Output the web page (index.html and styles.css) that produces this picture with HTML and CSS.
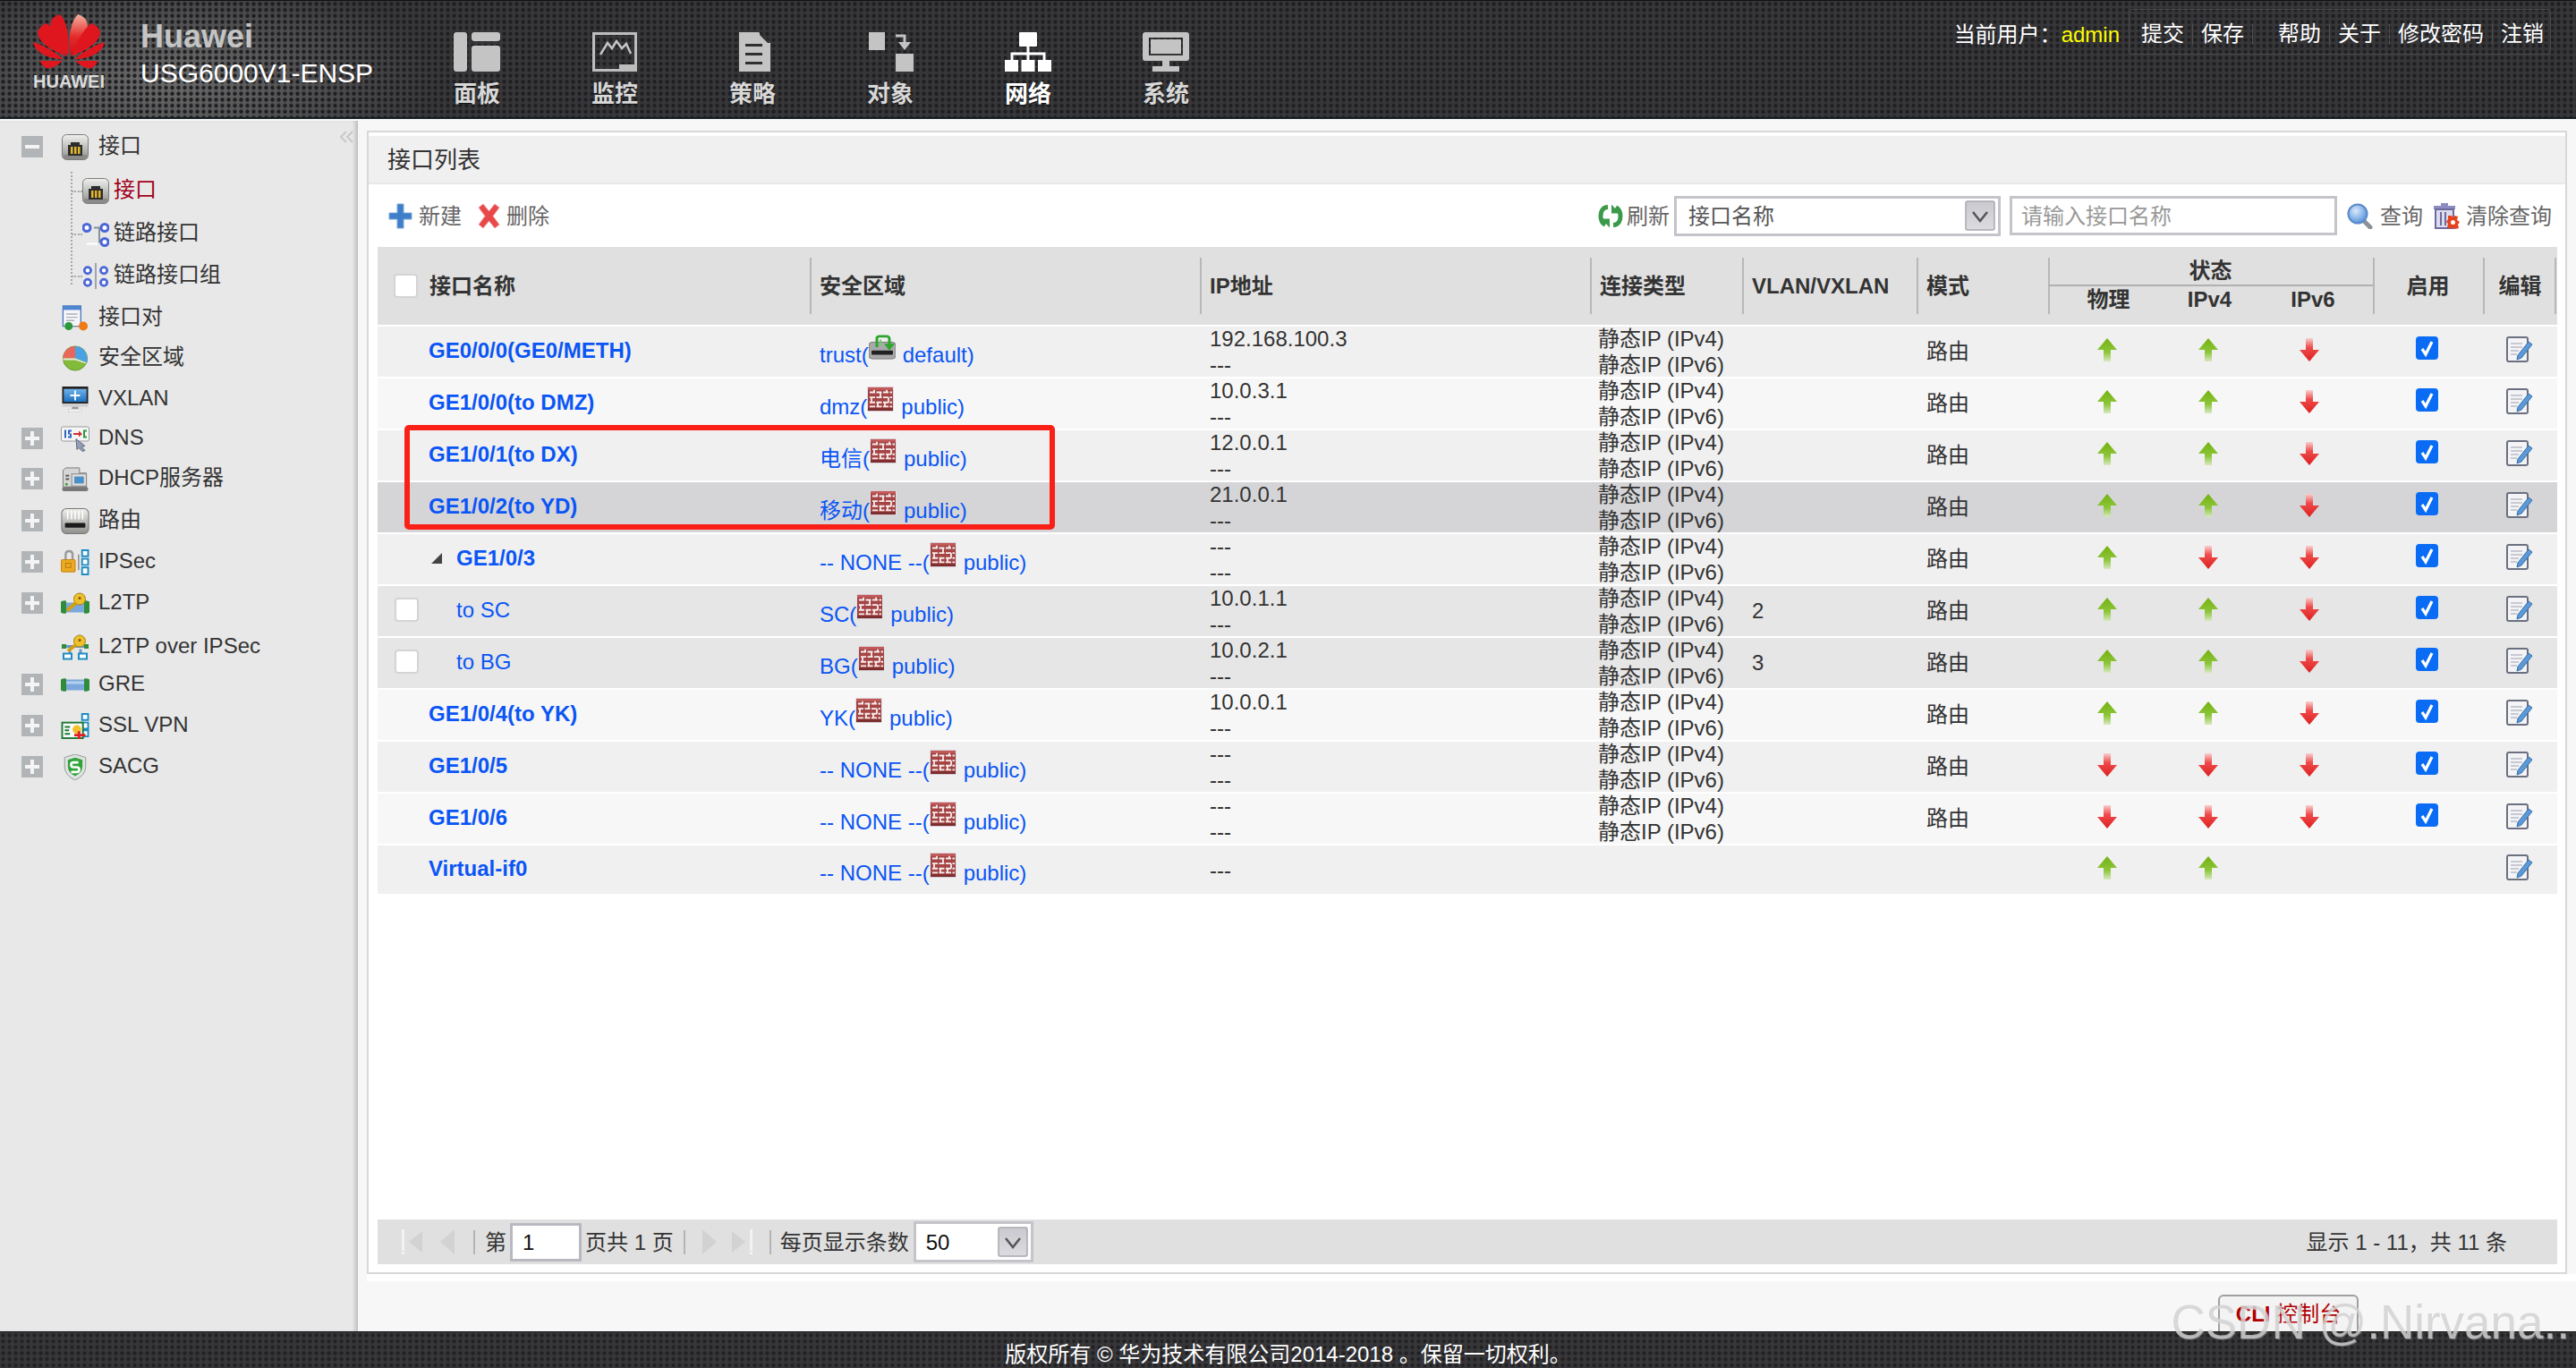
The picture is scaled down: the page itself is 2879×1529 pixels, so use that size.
FILE: index.html
```html
<!DOCTYPE html>
<html lang="zh-CN">
<head>
<meta charset="utf-8">
<title>USG6000V1-ENSP</title>
<link rel="stylesheet" href="styles.css">
</head>
<body>
<svg class="defs" aria-hidden="true">
  <defs>
    <linearGradient id="g-up" x1="0" y1="0" x2="0" y2="1"><stop offset="0" stop-color="#74b10f"/><stop offset=".6" stop-color="#8cc63a"/><stop offset="1" stop-color="#d8e8c0"/></linearGradient>
    <linearGradient id="g-down" x1="0" y1="1" x2="0" y2="0"><stop offset="0" stop-color="#dd2020"/><stop offset=".6" stop-color="#ef4a4a"/><stop offset="1" stop-color="#f8d0d0"/></linearGradient>
    <linearGradient id="g-btn" x1="0" y1="0" x2="0" y2="1"><stop offset="0" stop-color="#c9c9cf"/><stop offset="1" stop-color="#dcdce0"/></linearGradient>
    <linearGradient id="g-petal" x1="0" y1="0" x2="0" y2="1"><stop offset="0" stop-color="#f6b0a0"/><stop offset=".55" stop-color="#e32a2a"/><stop offset="1" stop-color="#d0101a"/></linearGradient>
    <linearGradient id="g-blue" x1="0" y1="0" x2="0" y2="1"><stop offset="0" stop-color="#6fb4ec"/><stop offset="1" stop-color="#1d6fc0"/></linearGradient>
    <linearGradient id="g-port" x1="0" y1="0" x2="0" y2="1"><stop offset="0" stop-color="#f0f0ee"/><stop offset="1" stop-color="#8f8f8c"/></linearGradient>
    <radialGradient id="g-lens" cx=".4" cy=".35" r=".7"><stop offset="0" stop-color="#dbe9fb"/><stop offset="1" stop-color="#4f8fdc"/></radialGradient>

    <symbol id="s-logo" viewBox="0 0 78 62" preserveAspectRatio="none">
      <g fill="#e0161e">
        <path d="M38 47C24 34 15 20 20 8 22 4 26 2 29 1 37 8 40 26 38 47Z"/>
        <path d="M36 48C20 41 4 32 5 20 7 15 11 12 15 11 24 20 33 34 36 48Z"/>
        <path d="M33 51C20 51 3 46 0 32 10 35 24 43 33 51Z"/>
        <path d="M32 53C25 60 18 62 14 61 11 59 9 56 7 53Z"/>
      </g>
      <g fill="#e0161e" transform="matrix(-1 0 0 1 78 0)">
        <path fill="url(#g-petal)" d="M38 47C24 34 15 20 20 8 22 4 26 2 29 1 37 8 40 26 38 47Z"/>
        <path d="M36 48C20 41 4 32 5 20 7 15 11 12 15 11 24 20 33 34 36 48Z"/>
        <path d="M33 51C20 51 3 46 0 32 10 35 24 43 33 51Z"/>
        <path d="M32 53C25 60 18 62 14 61 11 59 9 56 7 53Z"/>
      </g>
    </symbol>

    <symbol id="n-panel" viewBox="0 0 52 44"><rect x="0" y="0" width="15" height="44" rx="3" fill="#c4c4c4"/><rect x="20" y="0" width="32" height="10" rx="3" fill="#c4c4c4"/><rect x="20" y="15" width="32" height="29" rx="3" fill="#c4c4c4"/></symbol>
    <symbol id="n-monitor" viewBox="0 0 50 44"><path fill="#bdbdbd" d="M0 0H50V44H0ZM3 3V41H30V36H47V3Z"/><path fill="none" stroke="#c4c4c4" stroke-width="2.5" d="M9 25L17 12 22 18 27 10 33 18 38 13 43 24"/><rect x="33" y="37" width="14" height="4" fill="#bdbdbd"/></symbol>
    <symbol id="n-policy" viewBox="0 0 40 44"><path fill="#c4c4c4" d="M5 0H27L40 12V44H5Z"/><path fill="#2f2f32" d="M12 13H31V16H12ZM12 23H31V26H12ZM12 33H31V36H12Z"/><path fill="#2f2f32" d="M28 0L40 12H37L28 3Z"/></symbol>
    <symbol id="n-object" viewBox="0 0 52 44"><rect x="2" y="0" width="18" height="20" fill="#c4c4c4"/><rect x="32" y="24" width="20" height="20" fill="#c4c4c4"/><path fill="none" stroke="#c4c4c4" stroke-width="3" d="M32 4H42V12"/><path fill="#c4c4c4" d="M35 11H49L42 20Z"/></symbol>
    <symbol id="n-network" viewBox="0 0 52 44"><rect x="16" y="0" width="20" height="16" rx="1" fill="#fff"/><path fill="none" stroke="#fff" stroke-width="3" d="M26 16V24M8 32V24H44V32M26 24V32"/><rect x="0" y="31" width="15" height="13" fill="#fff"/><rect x="18.500" y="31" width="15" height="13" fill="#fff"/><rect x="37" y="31" width="15" height="13" fill="#fff"/></symbol>
    <symbol id="n-system" viewBox="0 0 52 44"><path fill="#c4c4c4" d="M3 0H49Q52 0 52 3V29Q52 32 49 32H3Q0 32 0 29V3Q0 0 3 0ZM7 6V26H45V6Z"/><rect x="9" y="8" width="34" height="16" fill="#c4c4c4"/><rect x="22" y="32" width="8" height="6" fill="#c4c4c4"/><rect x="11" y="38" width="30" height="6" fill="#c4c4c4"/></symbol>

    <symbol id="i-port" viewBox="0 0 30 29"><rect x=".5" y=".5" width="29" height="28" rx="5" fill="url(#g-port)" stroke="#7c7c7a"/><rect x="2" y="23" width="26" height="5" fill="#8a8a88"/><path fill="#2d2d2d" d="M7 12H10V9H20V12H23V24H7Z"/><path fill="#e2b52c" d="M10 14H12.500V22H10ZM14 14H16.500V22H14ZM18 14H20.500V22H18Z"/></symbol>
    <symbol id="i-link" viewBox="0 0 30 28"><path fill="none" stroke="#8a8f99" stroke-width="2" d="M13 7H19V23H25"/><circle cx="5" cy="7" r="4" fill="#fff" stroke="#4a66d8" stroke-width="3"/><circle cx="25" cy="7" r="4" fill="#fff" stroke="#4a66d8" stroke-width="3"/><circle cx="25" cy="23" r="4" fill="#fff" stroke="#4a66d8" stroke-width="3"/><rect x="5" y="24" width="12" height="2" fill="#fff"/></symbol>
    <symbol id="i-linkgroup" viewBox="0 0 30 32"><rect x="14" y="0" width="2" height="32" fill="#9a9ea6"/><circle cx="5" cy="9" r="4" fill="#fff" stroke="#4a66d8" stroke-width="3"/><circle cx="25" cy="9" r="4" fill="#fff" stroke="#4a66d8" stroke-width="3"/><circle cx="5" cy="24" r="4" fill="#fff" stroke="#4a66d8" stroke-width="3"/><circle cx="25" cy="24" r="4" fill="#fff" stroke="#4a66d8" stroke-width="3"/></symbol>
    <symbol id="i-pair" viewBox="0 0 32 32"><path fill="#f6f6fa" stroke="#4e78c0" stroke-width="1.500" d="M1 1H23V26H1Z"/><rect x="1" y="1" width="22" height="5" fill="#4e86d0"/><path stroke="#b0b0b8" stroke-width="1.500" d="M5 11H19M5 15H19M5 19H15"/><circle cx="8" cy="26" r="5" fill="#2c9a3c"/><circle cx="26" cy="26" r="5.500" fill="#f07a14"/><path stroke="#888" d="M13 26H20"/></symbol>
    <symbol id="i-zone" viewBox="0 0 30 30"><circle cx="15" cy="15" r="14" fill="#82bb3a" stroke="#5f9a22"/><path fill="#e8675a" d="M15 15V1A14 14 0 0 0 1 15Z"/><path fill="#4aa2e4" d="M15 15V1A14 14 0 0 1 29 15L29 20Z"/><path fill="#e8e8d8" d="M1 15H15L28 20 27 21 15 17H1Z"/></symbol>
    <symbol id="i-vxlan" viewBox="0 0 32 32"><rect x="0" y="0" width="32" height="21" fill="#222"/><rect x="2" y="3" width="28" height="16" fill="url(#g-blue)"/><path fill="#fff" d="M15 5H17V10H22V12H17V17H15V12H10V10H15Z"/><rect x="0" y="21" width="32" height="4" fill="#d0d0d0"/><rect x="12" y="25" width="8" height="3" fill="#999"/><rect x="8" y="28" width="16" height="3" fill="#f4f4f4" stroke="#bbb" stroke-width=".5"/></symbol>
    <symbol id="i-dns" viewBox="0 0 32 28"><rect x=".5" y=".5" width="31" height="16" rx="2" fill="#f6f6f6" stroke="#9a9a9a"/><path fill="#2a66c4" d="M4 4H6V13H4ZM8 4H12V6H10V8H12V13H8V11H10V9H8Z"/><path fill="#d03030" d="M14 7.500H20V5L24 8.500 20 12V9.500H14Z"/><path fill="#2a9a40" d="M25 4H29V6H27V11H29V13H25Z"/><path fill="#8ea0bc" stroke="#667" d="M17 14L27 22 23 23 27 27 24 28 20 24 18 26Z"/></symbol>
    <symbol id="i-dhcp" viewBox="0 0 30 30"><path fill="#d6d6d6" stroke="#777" d="M4 2H20V8H28V24H1V5Z"/><rect x="11" y="9" width="17" height="14" fill="#dcdcdc" stroke="#888"/><rect x="14" y="12" width="11" height="8" fill="#4a90c8"/><rect x="4" y="10" width="4" height="2" fill="#555"/><rect x="4" y="14" width="4" height="2" fill="#555"/><rect x="0" y="24" width="30" height="5" rx="2" fill="#777"/><circle cx="5" cy="21" r="1.500" fill="#3aa03a"/></symbol>
    <symbol id="i-route" viewBox="0 0 30 28"><rect x=".5" y=".5" width="29" height="27" rx="5" fill="url(#g-port)" stroke="#777"/><path stroke="#fff" stroke-width="1.500" d="M7 3V12M11 3V12M15 3V12M19 3V12M23 3V12"/><rect x="4" y="16" width="22" height="5" rx="1" fill="#1c1c1c"/></symbol>
    <symbol id="i-ipsec" viewBox="0 0 32 30"><path fill="none" stroke="#9a9a9a" stroke-width="2.500" d="M5 12V6Q5 2 9 2 13 2 13 6V12"/><rect x="0" y="12" width="16" height="14" rx="1" fill="#ecaa22" stroke="#c07f10"/><rect x="5" y="16" width="6" height="5" fill="none" stroke="#b67810"/><path stroke="#888" stroke-width="1.500" d="M20 6V24"/><path fill="#fff" stroke="#1d8cc4" stroke-width="2" d="M24 1H31V8H24ZM24 11H31V18H24ZM24 21H31V29H24Z"/></symbol>
    <symbol id="i-l2tp" viewBox="0 0 32 24"><rect x="3" y="11" width="26" height="11" fill="#7aa8dc"/><path fill="#2e8c3a" d="M0 10Q4 8 6 9V23Q3 24 0 22ZM32 10Q28 8 26 9V23Q29 24 32 22Z"/><circle cx="21" cy="7" r="6.500" fill="#eec02c" stroke="#a57f10"/><path stroke="#d0a010" stroke-width="4" d="M17 11L7 20"/><circle cx="21" cy="6" r="1.500" fill="#7a5a08"/></symbol>
    <symbol id="i-l2tpi" viewBox="0 0 32 28"><path stroke="#2e8c3a" stroke-width="5" d="M1 13H6M26 13H31"/><path stroke="#6a96d0" stroke-width="3" d="M6 13H26M10 16V21M22 16V21"/><path fill="#fff" stroke="#1d8cc4" stroke-width="2" d="M3 21H12V27H3ZM20 21H29V27H20Z"/><circle cx="21" cy="7" r="6.500" fill="#eec02c" stroke="#a57f10"/><path stroke="#d0a010" stroke-width="4" d="M17 11L8 18"/><circle cx="21" cy="6" r="1.500" fill="#7a5a08"/></symbol>
    <symbol id="i-gre" viewBox="0 0 32 16"><rect x="4" y="2" width="24" height="12" fill="#7aa8dc"/><rect x="4" y="4" width="24" height="3" fill="#b4d0ee"/><path fill="#2e8c3a" d="M0 2Q3 0 6 1V15Q3 16 0 14ZM32 2Q29 0 26 1V15Q29 16 32 14Z"/></symbol>
    <symbol id="i-ssl" viewBox="0 0 32 30"><path fill="#fff" stroke="#1d8cc4" stroke-width="2" d="M24 1H31V8H24ZM24 11H31V18H24ZM24 20H31V27H24Z"/><rect x="1" y="11" width="24" height="18" fill="#fafafa" stroke="#1a7a34" stroke-width="2"/><path stroke="#1a7a34" stroke-width="2" d="M4 16H10M4 20H9M4 24H10"/><circle cx="18" cy="19" r="5" fill="#f2c02c"/><path fill="#e02020" d="M19 21H22V24H28V27H22V30H19V27H15V24H19Z"/></symbol>
    <symbol id="i-sacg" viewBox="0 0 28 32"><path fill="#dfe3e2" stroke="#8c9490" d="M14 0L27 4V15Q27 26 14 32 1 26 1 15V4Z"/><path fill="#2fa43a" d="M14 4L23 7V15Q23 23 14 27 5 23 5 15V7Z"/><path fill="none" stroke="#fff" stroke-width="3" d="M18 10H12Q9 10 9 13T12 16H16Q19 16 19 19T16 22H9"/></symbol>

    <symbol id="i-wall" viewBox="0 0 30 30" preserveAspectRatio="none"><rect x="0" y="0" width="30" height="30" fill="#dfe3ec"/><rect x="1" y="1" width="28" height="28" fill="#a44444"/><rect x="1" y="1" width="28" height="3" fill="#c25a5a"/><path stroke="#f8eeee" stroke-width="2" fill="none" stroke-dasharray="6 1.500" d="M3 7H28M3 13H28M3 19H28M3 24H28"/><path stroke="#f8eeee" stroke-width="1.800" d="M8 4V7M22 4V7M15 7V13M5 13V19M24 13V19M12 19V24M20 19V24"/><rect x="1" y="26" width="28" height="3" fill="#7c2c2c"/></symbol>
    <symbol id="i-trust" viewBox="0 0 30 30" preserveAspectRatio="none"><rect x="0" y="9" width="30" height="20" rx="4" fill="#a9a9a9" stroke="#777"/><rect x="3" y="19" width="24" height="5" rx="1" fill="#222"/><path fill="none" stroke="#2ea52e" stroke-width="3" d="M9 15V4A3 3 0 0 1 12 2H20A3 3 0 0 1 23 5V12"/><path fill="#2ea52e" d="M17 11H29L23 19Z"/><path fill="none" stroke="#78c878" stroke-width="2" d="M13 6V14"/></symbol>

    <symbol id="i-up" viewBox="0 0 22 26"><path fill="url(#g-up)" d="M11 0L22 13H15V26H7V13H0Z"/></symbol>
    <symbol id="i-down" viewBox="0 0 22 26"><path fill="url(#g-down)" d="M7 0H15V13H22L11 26 0 13H7Z"/></symbol>
    <symbol id="i-check" viewBox="0 0 25 26"><path fill="none" stroke="#fff" stroke-width="3.200" d="M7 14L11 20 18 6"/></symbol>
    <symbol id="i-edit" viewBox="0 0 30 29"><rect x="1" y="1" width="23" height="27" rx="2" fill="#f4f4f6" stroke="#6a7080" stroke-width="2"/><path stroke="#b8bcc6" stroke-width="1.500" d="M5 8H18M5 12H18M5 16H14M5 20H12"/><path fill="#5a9ad8" stroke="#3a6ea8" d="M25 6L29 9 17 24 12 26 13 21Z"/></symbol>

    <symbol id="t-add" viewBox="0 0 27 29"><path fill="#3f7fc8" stroke="#7aa8d8" d="M10 1H17V11H26V18H17V28H10V18H1V11H10Z"/></symbol>
    <symbol id="t-del" viewBox="0 0 25 29"><path fill="#e84848" stroke="#f0a0a0" d="M6 1L12.500 9 19 1 24 5 17 14.500 24 24 19 28 12.500 20 6 28 1 24 8 14.500 1 5Z"/></symbol>
    <symbol id="t-refresh" viewBox="0 0 30 28"><path fill="none" stroke="#3a9a4a" stroke-width="5" d="M12 4C6 4 4 9 4 14 4 19 6 22 9 24"/><path fill="#3a9a4a" d="M5 17H14V27Z"/><path fill="none" stroke="#3a9a4a" stroke-width="5" d="M18 24C24 24 26 19 26 14 26 9 24 6 21 4"/><path fill="#3a9a4a" d="M25 11H16V1Z"/></symbol>
    <symbol id="t-search" viewBox="0 0 29 29"><path stroke="#8c9098" stroke-width="5" stroke-linecap="round" d="M18 19L26 27"/><circle cx="12" cy="12" r="10.500" fill="url(#g-lens)" stroke="#5a8ac8" stroke-width="2"/></symbol>
    <symbol id="t-trash" viewBox="0 0 30 29"><path fill="#8d8cc0" d="M9 0H17V3H25V7H1V3H9Z"/><path fill="#dcdcec" stroke="#6c6ba0" stroke-width="2" d="M3 7H23V28H3Z"/><path stroke="#6c6ba0" stroke-width="2" d="M9 10V25M14 10V25"/><path fill="#e8421c" d="M17 14H21L22 16 25 14 28 15 27 19 30 21 28 24 29 28 25 29 22 27 19 29 16 27 17 23 15 21 17 18Z"/><circle cx="22.500" cy="21.500" r="2.500" fill="#fff"/></symbol>
    <symbol id="t-chev" viewBox="0 0 34 34"><rect x="1" y="1" width="32" height="32" rx="2" fill="url(#g-btn)" stroke="#a8a8ae" stroke-width="1.500"/><path fill="none" stroke="#555" stroke-width="2.500" d="M9 13L17 23 25 13"/></symbol>

    <symbol id="p-first" viewBox="0 0 23 28"><rect x="0" y="0" width="3" height="24" fill="#f2f2f2"/><rect x="0" y="25" width="3" height="3" fill="#f2f2f2"/><path fill="#d2d2d2" d="M23 2V26L8 14Z"/></symbol>
    <symbol id="p-prev" viewBox="0 0 16 28"><path fill="#d2d2d2" d="M16 0V28L0 14Z"/></symbol>
    <symbol id="p-next" viewBox="0 0 16 28"><path fill="#d2d2d2" d="M0 0V28L16 14Z"/></symbol>
    <symbol id="p-last" viewBox="0 0 24 28"><path fill="#d2d2d2" d="M0 2V26L15 14Z"/><rect x="20" y="0" width="3" height="24" fill="#f2f2f2"/><rect x="20" y="25" width="3" height="3" fill="#f2f2f2"/></symbol>
    <symbol id="i-collapse" viewBox="0 0 16 14"><path fill="none" stroke="#c8c8c8" stroke-width="2" d="M8 1L2 7 8 13M15 1L9 7 15 13"/></symbol>
  </defs>
</svg>

<header class="topbar">
  <div class="brand">
    <svg class="logo-mark"><use href="#s-logo"/></svg>
    <span class="logo-word">HUAWEI</span>
  </div>
  <div class="product">
    <div class="product-vendor">Huawei</div>
    <div class="product-name">USG6000V1-ENSP</div>
  </div>
  <nav class="mainnav">
    <a class="nav-item"><svg class="nav-icon"><use href="#n-panel"/></svg><span>面板</span></a>
    <a class="nav-item"><svg class="nav-icon"><use href="#n-monitor"/></svg><span>监控</span></a>
    <a class="nav-item"><svg class="nav-icon"><use href="#n-policy"/></svg><span>策略</span></a>
    <a class="nav-item"><svg class="nav-icon"><use href="#n-object"/></svg><span>对象</span></a>
    <a class="nav-item nav-active"><svg class="nav-icon"><use href="#n-network"/></svg><span>网络</span></a>
    <a class="nav-item"><svg class="nav-icon"><use href="#n-system"/></svg><span>系统</span></a>
  </nav>
  <div class="userbar">
    <span class="user-label">当前用户：</span><span class="user-name">admin</span>
    <div class="user-actions">
      <a class="ua">提交</a><a class="ua">保存</a><a class="ua ua-gap">帮助</a><a class="ua">关于</a><a class="ua">修改密码</a><a class="ua ua-last">注销</a>
    </div>
  </div>
</header>

<div class="main">
  <aside class="sidebar">
    <svg class="collapse"><use href="#i-collapse"/></svg>
    <div class="tree-row"><span class="exp exp-minus"></span><svg class="tree-icon"><use href="#i-port"/></svg><span class="tree-label">接口</span></div>
    <div class="subtree">
      <div class="tree-row sub t-p3"><svg class="sub-icon"><use href="#i-port"/></svg><span class="tree-label sel">接口</span></div>
      <div class="tree-row sub t-p2"><svg class="sub-icon"><use href="#i-link"/></svg><span class="tree-label">链路接口</span></div>
      <div class="tree-row sub t-p1"><svg class="sub-icon"><use href="#i-linkgroup"/></svg><span class="tree-label">链路接口组</span></div>
    </div>
    <div class="tree-row t-p1"><span class="exp exp-none"></span><svg class="tree-icon"><use href="#i-pair"/></svg><span class="tree-label">接口对</span></div>
    <div class="tree-row t-n1"><span class="exp exp-none"></span><svg class="tree-icon"><use href="#i-zone"/></svg><span class="tree-label">安全区域</span></div>
    <div class="tree-row"><span class="exp exp-none"></span><svg class="tree-icon"><use href="#i-vxlan"/></svg><span class="tree-label">VXLAN</span></div>
    <div class="tree-row t-n2"><span class="exp exp-plus"></span><svg class="tree-icon"><use href="#i-dns"/></svg><span class="tree-label">DNS</span></div>
    <div class="tree-row t-n1"><span class="exp exp-plus"></span><svg class="tree-icon"><use href="#i-dhcp"/></svg><span class="tree-label">DHCP服务器</span></div>
    <div class="tree-row t-p1"><span class="exp exp-plus"></span><svg class="tree-icon"><use href="#i-route"/></svg><span class="tree-label">路由</span></div>
    <div class="tree-row"><span class="exp exp-plus"></span><svg class="tree-icon"><use href="#i-ipsec"/></svg><span class="tree-label">IPSec</span></div>
    <div class="tree-row"><span class="exp exp-plus"></span><svg class="tree-icon"><use href="#i-l2tp"/></svg><span class="tree-label">L2TP</span></div>
    <div class="tree-row t-p3"><span class="exp exp-none"></span><svg class="tree-icon"><use href="#i-l2tpi"/></svg><span class="tree-label">L2TP over IPSec</span></div>
    <div class="tree-row t-n4"><span class="exp exp-plus"></span><svg class="tree-icon"><use href="#i-gre"/></svg><span class="tree-label">GRE</span></div>
    <div class="tree-row"><span class="exp exp-plus"></span><svg class="tree-icon"><use href="#i-ssl"/></svg><span class="tree-label">SSL VPN</span></div>
    <div class="tree-row"><span class="exp exp-plus"></span><svg class="tree-icon"><use href="#i-sacg"/></svg><span class="tree-label">SACG</span></div>
  </aside>

  <section class="content">
    <div class="panel">
      <h2 class="panel-title">接口列表</h2>
      <div class="panel-body">
        <div class="toolbar">
          <a class="tool"><svg class="t-27"><use href="#t-add"/></svg><span>新建</span></a>
          <a class="tool tool-del"><svg class="t-25"><use href="#t-del"/></svg><span>删除</span></a>
          <div class="tool-right">
            <a class="tool tool-tight"><svg class="t-30"><use href="#t-refresh"/></svg><span>刷新</span></a>
            <div class="select select-field"><span>接口名称</span><svg class="chev"><use href="#t-chev"/></svg></div>
            <div class="search-input">请输入接口名称</div>
            <a class="tool tool-search"><svg class="t-29"><use href="#t-search"/></svg><span>查询</span></a>
            <a class="tool tool-clear"><svg class="t-30"><use href="#t-trash"/></svg><span>清除查询</span></a>
          </div>
        </div>

        <div class="table-wrap">
          <table class="grid">
            <colgroup>
              <col class="c-name"><col class="c-zone"><col class="c-ip"><col class="c-conn"><col class="c-vlan"><col class="c-mode"><col class="c-s1"><col class="c-s2"><col class="c-s3"><col class="c-on"><col class="c-edit">
            </colgroup>
            <thead>
              <tr>
                <th rowspan="2" class="th-first"><div class="name"><span class="slot-h"><span class="check-box"></span></span>接口名称</div></th>
                <th rowspan="2" class="sep">安全区域</th>
                <th rowspan="2" class="sep">IP地址</th>
                <th rowspan="2" class="sep">连接类型</th>
                <th rowspan="2" class="sep">VLAN/VXLAN</th>
                <th rowspan="2" class="sep">模式</th>
                <th colspan="3" class="th-group">状态</th>
                <th rowspan="2" class="sep center">启用</th>
                <th rowspan="2" class="sep sep-end center">编辑</th>
              </tr>
              <tr>
                <th class="th-sub th-sub-first">物理</th>
                <th class="th-sub">IPv4</th>
                <th class="th-sub">IPv6</th>
              </tr>
            </thead>
            <tbody>
              <tr class="row-a">
                <td><div class="name strong"><span class="slot"></span>GE0/0/0(GE0/METH)</div></td>
                <td class="link">trust(<svg class="zone-ico"><use href="#i-trust"/></svg>default)</td>
                <td><div class="two">192.168.100.3<br>---</div></td>
                <td class="conn"><div class="two">静态IP (IPv4)<br>静态IP (IPv6)</div></td><td></td><td>路由</td>
                <td class="center"><svg class="arrow"><use href="#i-up"/></svg></td><td class="center"><svg class="arrow"><use href="#i-up"/></svg></td><td class="center"><svg class="arrow"><use href="#i-down"/></svg></td>
                <td class="center"><span class="on"><svg><use href="#i-check"/></svg></span></td><td class="center"><svg class="edit"><use href="#i-edit"/></svg></td>
              </tr>
              <tr class="row-b">
                <td><div class="name strong"><span class="slot"></span>GE1/0/0(to DMZ)</div></td>
                <td class="link">dmz(<svg class="zone-ico"><use href="#i-wall"/></svg>public)</td>
                <td><div class="two">10.0.3.1<br>---</div></td>
                <td class="conn"><div class="two">静态IP (IPv4)<br>静态IP (IPv6)</div></td><td></td><td>路由</td>
                <td class="center"><svg class="arrow"><use href="#i-up"/></svg></td><td class="center"><svg class="arrow"><use href="#i-up"/></svg></td><td class="center"><svg class="arrow"><use href="#i-down"/></svg></td>
                <td class="center"><span class="on"><svg><use href="#i-check"/></svg></span></td><td class="center"><svg class="edit"><use href="#i-edit"/></svg></td>
              </tr>
              <tr class="row-a">
                <td><div class="name strong"><span class="slot"></span>GE1/0/1(to DX)</div></td>
                <td class="link">电信(<svg class="zone-ico"><use href="#i-wall"/></svg>public)</td>
                <td><div class="two">12.0.0.1<br>---</div></td>
                <td class="conn"><div class="two">静态IP (IPv4)<br>静态IP (IPv6)</div></td><td></td><td>路由</td>
                <td class="center"><svg class="arrow"><use href="#i-up"/></svg></td><td class="center"><svg class="arrow"><use href="#i-up"/></svg></td><td class="center"><svg class="arrow"><use href="#i-down"/></svg></td>
                <td class="center"><span class="on"><svg><use href="#i-check"/></svg></span></td><td class="center"><svg class="edit"><use href="#i-edit"/></svg></td>
              </tr>
              <tr class="row-hover">
                <td><div class="name strong"><span class="slot"></span>GE1/0/2(to YD)</div></td>
                <td class="link">移动(<svg class="zone-ico"><use href="#i-wall"/></svg>public)</td>
                <td><div class="two">21.0.0.1<br>---</div></td>
                <td class="conn"><div class="two">静态IP (IPv4)<br>静态IP (IPv6)</div></td><td></td><td>路由</td>
                <td class="center"><svg class="arrow"><use href="#i-up"/></svg></td><td class="center"><svg class="arrow"><use href="#i-up"/></svg></td><td class="center"><svg class="arrow"><use href="#i-down"/></svg></td>
                <td class="center"><span class="on"><svg><use href="#i-check"/></svg></span></td><td class="center"><svg class="edit"><use href="#i-edit"/></svg></td>
              </tr>
              <tr class="row-a">
                <td><div class="name strong"><span class="slot"></span><span class="indent"><span class="tri"></span></span>GE1/0/3</div></td>
                <td class="link">-- NONE --(<svg class="zone-ico"><use href="#i-wall"/></svg>public)</td>
                <td><div class="two">---<br>---</div></td>
                <td class="conn"><div class="two">静态IP (IPv4)<br>静态IP (IPv6)</div></td><td></td><td>路由</td>
                <td class="center"><svg class="arrow"><use href="#i-up"/></svg></td><td class="center"><svg class="arrow"><use href="#i-down"/></svg></td><td class="center"><svg class="arrow"><use href="#i-down"/></svg></td>
                <td class="center"><span class="on"><svg><use href="#i-check"/></svg></span></td><td class="center"><svg class="edit"><use href="#i-edit"/></svg></td>
              </tr>
              <tr class="row-c">
                <td><div class="name link"><span class="slot"><span class="check-box"></span></span><span class="indent"></span>to SC</div></td>
                <td class="link">SC(<svg class="zone-ico"><use href="#i-wall"/></svg>public)</td>
                <td><div class="two">10.0.1.1<br>---</div></td>
                <td class="conn"><div class="two">静态IP (IPv4)<br>静态IP (IPv6)</div></td><td>2</td><td>路由</td>
                <td class="center"><svg class="arrow"><use href="#i-up"/></svg></td><td class="center"><svg class="arrow"><use href="#i-up"/></svg></td><td class="center"><svg class="arrow"><use href="#i-down"/></svg></td>
                <td class="center"><span class="on"><svg><use href="#i-check"/></svg></span></td><td class="center"><svg class="edit"><use href="#i-edit"/></svg></td>
              </tr>
              <tr class="row-c">
                <td><div class="name link"><span class="slot"><span class="check-box"></span></span><span class="indent"></span>to BG</div></td>
                <td class="link">BG(<svg class="zone-ico"><use href="#i-wall"/></svg>public)</td>
                <td><div class="two">10.0.2.1<br>---</div></td>
                <td class="conn"><div class="two">静态IP (IPv4)<br>静态IP (IPv6)</div></td><td>3</td><td>路由</td>
                <td class="center"><svg class="arrow"><use href="#i-up"/></svg></td><td class="center"><svg class="arrow"><use href="#i-up"/></svg></td><td class="center"><svg class="arrow"><use href="#i-down"/></svg></td>
                <td class="center"><span class="on"><svg><use href="#i-check"/></svg></span></td><td class="center"><svg class="edit"><use href="#i-edit"/></svg></td>
              </tr>
              <tr class="row-b">
                <td><div class="name strong"><span class="slot"></span>GE1/0/4(to YK)</div></td>
                <td class="link">YK(<svg class="zone-ico"><use href="#i-wall"/></svg>public)</td>
                <td><div class="two">10.0.0.1<br>---</div></td>
                <td class="conn"><div class="two">静态IP (IPv4)<br>静态IP (IPv6)</div></td><td></td><td>路由</td>
                <td class="center"><svg class="arrow"><use href="#i-up"/></svg></td><td class="center"><svg class="arrow"><use href="#i-up"/></svg></td><td class="center"><svg class="arrow"><use href="#i-down"/></svg></td>
                <td class="center"><span class="on"><svg><use href="#i-check"/></svg></span></td><td class="center"><svg class="edit"><use href="#i-edit"/></svg></td>
              </tr>
              <tr class="row-a">
                <td><div class="name strong"><span class="slot"></span>GE1/0/5</div></td>
                <td class="link">-- NONE --(<svg class="zone-ico"><use href="#i-wall"/></svg>public)</td>
                <td><div class="two">---<br>---</div></td>
                <td class="conn"><div class="two">静态IP (IPv4)<br>静态IP (IPv6)</div></td><td></td><td>路由</td>
                <td class="center"><svg class="arrow"><use href="#i-down"/></svg></td><td class="center"><svg class="arrow"><use href="#i-down"/></svg></td><td class="center"><svg class="arrow"><use href="#i-down"/></svg></td>
                <td class="center"><span class="on"><svg><use href="#i-check"/></svg></span></td><td class="center"><svg class="edit"><use href="#i-edit"/></svg></td>
              </tr>
              <tr class="row-b">
                <td><div class="name strong"><span class="slot"></span>GE1/0/6</div></td>
                <td class="link">-- NONE --(<svg class="zone-ico"><use href="#i-wall"/></svg>public)</td>
                <td><div class="two">---<br>---</div></td>
                <td class="conn"><div class="two">静态IP (IPv4)<br>静态IP (IPv6)</div></td><td></td><td>路由</td>
                <td class="center"><svg class="arrow"><use href="#i-down"/></svg></td><td class="center"><svg class="arrow"><use href="#i-down"/></svg></td><td class="center"><svg class="arrow"><use href="#i-down"/></svg></td>
                <td class="center"><span class="on"><svg><use href="#i-check"/></svg></span></td><td class="center"><svg class="edit"><use href="#i-edit"/></svg></td>
              </tr>
              <tr class="row-a row-last">
                <td><div class="name strong"><span class="slot"></span>Virtual-if0</div></td>
                <td class="link">-- NONE --(<svg class="zone-ico"><use href="#i-wall"/></svg>public)</td>
                <td>---</td>
                <td></td><td></td><td></td>
                <td class="center"><svg class="arrow"><use href="#i-up"/></svg></td><td class="center"><svg class="arrow"><use href="#i-up"/></svg></td><td></td>
                <td></td><td class="center"><svg class="edit"><use href="#i-edit"/></svg></td>
              </tr>
            </tbody>
          </table>
          <div class="callout"></div>
        </div>

        <div class="pager">
          <svg class="pg-first"><use href="#p-first"/></svg>
          <svg class="pg-prev"><use href="#p-prev"/></svg>
          <span class="pg-sep pg-sep-a"></span>
          <span class="pg-page">第</span>
          <span class="pg-input">1</span>
          <span class="pg-total">页共 1 页</span>
          <span class="pg-sep pg-sep-b"></span>
          <svg class="pg-next"><use href="#p-next"/></svg>
          <svg class="pg-last"><use href="#p-last"/></svg>
          <span class="pg-sep pg-sep-c"></span>
          <span class="pg-size">每页显示条数</span>
          <div class="select pg-select"><span>50</span><svg class="chev"><use href="#t-chev"/></svg></div>
          <span class="pg-count">显示 1 - 11，共 11 条</span>
        </div>
      </div>
    </div>
    <div class="below">
      <a class="cli-btn"><b>CLI</b> 控制台</a>
    </div>
  </section>
</div>

<footer class="footer">版权所有 © 华为技术有限公司2014-2018 。保留一切权利。</footer>
<div class="watermark">CSDN @.Nirvana..</div>
</body>
</html>
```

FILE: styles.css
```css
* { box-sizing: border-box; }
html, body { margin: 0; height: 100%; }
body {
  position: relative;
  display: flex;
  flex-direction: column;
  height: 1529px;
  overflow: hidden;
  background: #f7f7f7;
  color: #333;
  font: 24px/29px "Liberation Sans", "Noto Sans CJK SC", sans-serif;
}
.defs { position: absolute; width: 0; height: 0; overflow: hidden; }
svg { display: block; }

/* top bar */
.topbar {
  flex: none;
  height: 133px;
  display: flex;
  border-top: 1px solid #111;
  border-bottom: 2px solid #152023;
  background:
    radial-gradient(circle at 3.5px 3.4px, #1f1f22 1.8px, rgba(31,31,34,0) 2.6px) 0 0 / 7px 6.7px,
    radial-gradient(ellipse 300px 120px at 190px 85px, #6c6c6c, rgba(70,70,70,0) 100%),
    #37373a;
}
.brand { width: 157px; padding: 14px 0 0 37px; flex: none; display: flex; flex-direction: column; }
.logo-mark { width: 80px; height: 62px; }
.logo-word { width: 80px; margin-top: 3px; font-size: 20px; line-height: 22px; font-weight: 700; color: #dcdcdc; }
.product { width: 299px; flex: none; padding-top: 19px; }
.product-vendor { font-size: 36px; line-height: 42px; font-weight: 700; color: #c4c4c4; }
.product-name { font-size: 30px; line-height: 40px; color: #fff; }
.mainnav { display: flex; flex: none; }
.nav-item {
  width: 154px;
  padding-top: 35px;
  display: flex;
  flex-direction: column;
  align-items: center;
  font-size: 26px;
  line-height: 32px;
  font-weight: 700;
  color: #d8d8d8;
  text-shadow: 0 1px 1px #111;
}
.nav-active { color: #fff; }
.nav-icon { width: 52px; height: 44px; margin-bottom: 9px; }
.userbar { margin-left: auto; margin-right: 28px; display: flex; align-items: flex-start; padding-top: 9px; color: #fff; }
.user-label { padding-top: 14px; }
.user-name { padding-top: 14px; margin-right: 10px; color: #ffff00; }
.user-actions {
  height: 51px;
  display: flex;
  align-items: center;
  padding: 4px 7px 0 13px;
  border: 1px solid #48484c;
  border-radius: 4px;
}
.ua { position: relative; margin-right: 19px; }
.ua::after { content: ""; position: absolute; right: -10px; top: 4px; bottom: 2px; width: 1px; background: #4e4e52; }
.ua-gap { margin-left: 19px; }
.ua-last { margin-right: 0; }
.ua-last::after { display: none; }

/* layout */
.main { flex: 1; min-height: 0; display: flex; }
.sidebar {
  position: relative;
  width: 400px;
  flex: none;
  margin-top: 2px;
  padding-top: 6px;
  background: #e8e8e8;
  box-shadow: inset -5px 0 4px -2px #bdbdbd;
}
.collapse { position: absolute; left: 379px; top: 11px; width: 16px; height: 14px; }
.tree-row { height: 46px; display: flex; align-items: center; color: #333; }
.t-p1 { margin-top: 1px; }
.t-p2 { margin-top: 2px; }
.t-p3 { margin-top: 3px; }
.t-n1 { margin-top: -1px; }
.t-n2 { margin-top: -2px; }
.t-n4 { margin-top: -4px; }
.exp { position: relative; width: 24px; height: 24px; margin-left: 24px; margin-right: 20px; flex: none; background: #b2b5b8; }
.exp-none { background: none; }
.exp-minus::before, .exp-plus::before { content: ""; position: absolute; left: 4px; right: 4px; top: 10px; height: 4px; background: #f4f4f4; }
.exp-plus::after { content: ""; position: absolute; top: 4px; bottom: 4px; left: 10px; width: 4px; background: #f4f4f4; }
.tree-icon { width: 32px; height: 29px; flex: none; margin-right: 10px; }
.tree-label { margin-bottom: 4px; white-space: nowrap; }
.sub { padding-left: 92px; }
.sub-icon { width: 30px; height: 29px; flex: none; margin-right: 5px; }
.sel { color: #a00018; }
.subtree { position: relative; }
.subtree::before { content: ""; position: absolute; left: 79px; top: 2px; height: 126px; border-left: 2px dotted #a8a8a8; }
.sub { position: relative; }
.sub::before { content: ""; position: absolute; left: 80px; width: 12px; top: 23px; border-top: 2px dotted #a8a8a8; }

.content { flex: 1; min-width: 0; display: flex; flex-direction: column; padding: 13px 10px 0 10px; }
.panel { flex: 1; min-height: 0; display: flex; flex-direction: column; border: 2px solid #d8d8d8; background: #fff; }
.panel-title {
  margin: 4px 0 0;
  height: 54px;
  padding: 11px 0 0 21px;
  font-size: 26px;
  line-height: 32px;
  font-weight: 400;
  color: #333;
  background: #f0f0f0;
  border-bottom: 2px solid #e8e8e8;
}
.panel-body { flex: 1; min-height: 0; display: flex; flex-direction: column; padding: 0 9px 9px 10px; }

/* toolbar */
.toolbar { height: 70px; flex: none; display: flex; align-items: center; padding: 0 6px 0 12px; color: #666; }
.tool { display: flex; align-items: center; gap: 7px; white-space: nowrap; }
.tool-del { margin-left: 18px; }
.tool-right { margin-left: auto; display: flex; align-items: center; }
.tool-tight { gap: 3px; }
.tool-search { margin-left: 11px; gap: 8px; }
.tool-clear { margin-left: 11px; }
.t-25 { width: 25px; height: 29px; }
.t-27 { width: 27px; height: 29px; }
.t-29 { width: 29px; height: 29px; }
.t-30 { width: 30px; height: 29px; }
.select { display: flex; align-items: center; justify-content: space-between; border: 3px solid #c4c4ca; background: #fff; }
.select-field { width: 365px; height: 45px; margin-left: 5px; padding: 0 3px 0 13px; color: #555; }
.chev { width: 34px; height: 34px; flex: none; }
.search-input { width: 366px; height: 44px; margin-left: 10px; padding: 5px 0 0 10px; border: 3px solid #c4c4ca; color: #999; line-height: 29px; }

/* table */
.table-wrap { position: relative; flex: none; }
.grid { width: 2436px; table-layout: fixed; border-collapse: separate; border-spacing: 0; }
.c-name { width: 483px; }
.c-zone { width: 436px; }
.c-ip { width: 436px; }
.c-conn { width: 170px; }
.c-vlan { width: 195px; }
.c-mode { width: 147px; }
.c-s1 { width: 132px; }
.c-s2 { width: 94px; }
.c-s3 { width: 137px; }
.c-on { width: 123px; }
.c-edit { width: 83px; }
.grid th {
  position: relative;
  height: 43px;
  padding: 0 0 0 11px;
  background: #e0e0e0;
  color: #333;
  font-weight: 700;
  text-align: left;
  white-space: nowrap;
}
.grid th.center { padding-left: 0; text-align: center; }
.grid th.th-first { padding-left: 19px; }
.sep::before { content: ""; position: absolute; left: 0; top: 12px; bottom: 12px; width: 2px; background: #b8b8b8; }
.sep-end::after { content: ""; position: absolute; right: 1px; top: 12px; bottom: 12px; width: 2px; background: #b8b8b8; }
.grid th.th-group { padding: 8px 0 0; text-align: center; height: 44px; }
.th-group::before { content: ""; position: absolute; left: 0; top: 12px; bottom: 0; width: 2px; background: #b8b8b8; }
.th-group::after { content: ""; position: absolute; left: 0; right: 0; bottom: 0; height: 2px; background: #b0b0b0; }
.grid th.th-sub { height: 42px; padding: 0 0 14px 3px; text-align: center; }
.th-sub-first::before { content: ""; position: absolute; left: 0; top: 0; bottom: 12px; width: 2px; background: #b8b8b8; }

.grid td {
  height: 58px;
  padding: 0 0 0 11px;
  border-top: 2px solid #fff;
  vertical-align: middle;
  white-space: nowrap;
}
.grid td:first-child { padding-left: 19px; padding-bottom: 3px; }
.grid td.link, .grid td:nth-child(5), .grid td:nth-child(6) { padding-bottom: 2px; }
.grid td.center { padding-left: 0; text-align: center; }
.grid td.center:nth-child(9) { padding-right: 6px; }
.grid td.center:nth-child(10), .grid td.center:nth-child(11) { padding-right: 2px; }
.grid td.conn { padding-left: 9px; }
.two { margin: -1px 0; }
.row-last td { height: 56px; }
.row-a td { background: #f0f0f0; }
.row-b td { background: #f7f7f7; }
.row-c td { background: #e6e6e6; }
.row-hover td { background: #d5d5d7; }
.name { display: flex; align-items: center; }
.strong { color: #0a55f5; font-weight: 700; }
.link { color: #0a55f5; }
.slot { width: 38px; flex: none; }
.slot-h { width: 40px; flex: none; margin-left: -1px; }
.indent { width: 31px; flex: none; display: flex; padding-left: 3px; }
.tri { width: 0; height: 0; border-left: 12px solid transparent; border-bottom: 12px solid #444; }
.check-box { display: block; width: 27px; height: 27px; background: #fff; border: 2px solid #d4d4d4; border-radius: 4px; }
.zone-ico { display: inline-block; width: 30px; height: 28px; margin: 0 8px 0 0; vertical-align: 3px; }
.arrow { width: 22px; height: 26px; margin: -5px auto 0; }
.on { display: block; width: 25px; height: 26px; background: #0a6cf5; border-radius: 4px; margin: -8px auto 0; }
.on svg { width: 25px; height: 26px; }
.edit { width: 30px; height: 29px; margin: -5px auto 0; }

.callout {
  position: absolute;
  left: 30px;
  top: 199px;
  width: 727px;
  height: 117px;
  border: 6px solid #fa2018;
  border-radius: 5px;
  pointer-events: none;
}

/* pager */
.pager { margin-top: auto; height: 50px; flex: none; display: flex; align-items: center; background: #e0e0e0; color: #333; white-space: nowrap; }
.pg-first { width: 23px; height: 28px; margin-left: 27px; }
.pg-prev { width: 16px; height: 28px; margin-left: 20px; }
.pg-sep { width: 2px; height: 27px; background: #b4b4b4; flex: none; }
.pg-sep-a { margin-left: 21px; }
.pg-sep-b { margin-left: 11px; }
.pg-sep-c { margin-left: 18px; }
.pg-page { margin-left: 11px; }
.pg-input { width: 80px; height: 43px; margin-left: 4px; padding: 4px 0 0 11px; border: 3px solid #b8b8c0; background: #fff; color: #111; }
.pg-total { margin-left: 4px; }
.pg-next { width: 16px; height: 28px; margin-left: 19px; }
.pg-last { width: 24px; height: 28px; margin-left: 17px; }
.pg-size { margin-left: 10px; }
.pg-select { width: 134px; height: 46px; margin-left: 5px; padding: 0 3px 0 11px; color: #111; }
.pg-count { margin-left: auto; margin-right: 56px; }

/* below the panel */
.below { flex: none; height: 64px; display: flex; justify-content: flex-end; align-items: flex-end; margin-right: -10px; padding-right: 243px; border-top: 8px solid #fff; }
.cli-btn {
  width: 157px;
  height: 41px;
  padding-top: 5px;
  text-align: center;
  color: #b00000;
  background: #f3f3f3;
  border: 2px solid #a0a0a0;
  border-bottom: 0;
  border-radius: 6px 6px 0 0;
}

.footer {
  flex: none;
  height: 41px;
  padding-top: 10px;
  text-align: center;
  color: #fff;
  border-top: 1px solid #111;
  background:
    radial-gradient(circle at 3.5px 3.4px, #222225 1.8px, rgba(34,34,37,0) 2.6px) 0 0 / 7px 6.7px,
    #37373a;
}
.watermark {
  position: absolute;
  right: 7px;
  bottom: 21px;
  font-size: 53px;
  line-height: 60px;
  color: rgba(206,206,206,.78);
  text-shadow: 1px 1px 1px rgba(255,255,255,.35);
  pointer-events: none;
  white-space: nowrap;
}
```
